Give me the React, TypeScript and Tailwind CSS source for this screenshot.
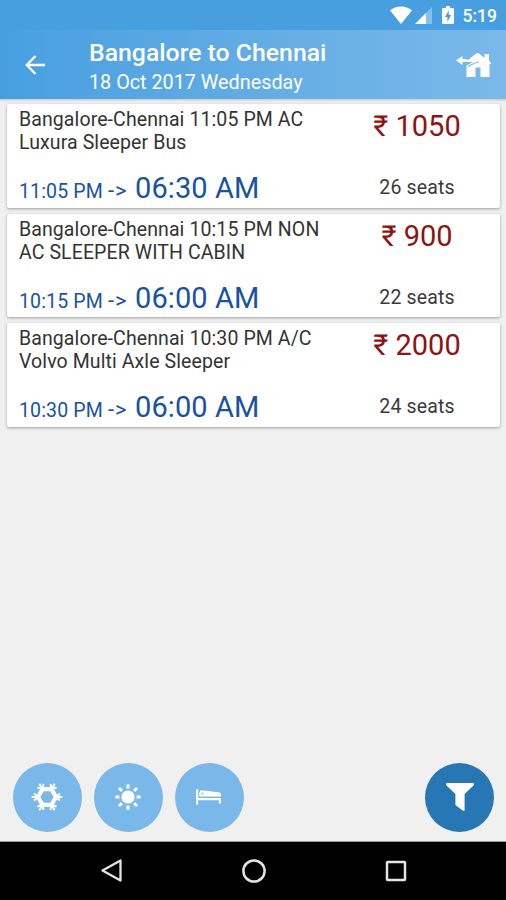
type Bus = {
  name: [string, string];
  departs: string;
  arrives: string;
  price: string;
  seats: number;
};

const buses: Bus[] = [
  { name: ['Bangalore-Chennai 11:05 PM AC', 'Luxura Sleeper Bus'], departs: '11:05 PM', arrives: '06:30 AM', price: '1050', seats: 26 },
  { name: ['Bangalore-Chennai 10:15 PM NON', 'AC SLEEPER WITH CABIN'], departs: '10:15 PM', arrives: '06:00 AM', price: '900', seats: 22 },
  { name: ['Bangalore-Chennai 10:30 PM A/C', 'Volvo Multi Axle Sleeper'], departs: '10:30 PM', arrives: '06:00 AM', price: '2000', seats: 24 },
];

function StatusBar() {
  return (
    <div className="flex h-[30px] items-center justify-end bg-[#479fe0] pr-[9px] text-white">
      <svg width="22" height="18" viewBox="0 0 22 18" fill="currentColor" className="mr-[3px]">
        <path d="M0 4.500C6-1 16-1 22 4.500L11 18z" />
      </svg>
      <svg width="18" height="17" viewBox="0 0 18 17" fill="currentColor" className="mr-[9px]">
        <path d="M0 17 17 0v17z" opacity=".35" />
        <path d="M0 17 11 6v11z" />
      </svg>
      <svg width="12" height="18" viewBox="0 0 12 18" className="mr-[9px]">
        <path d="M1.200 2H4V0h4v2h2.800Q12 2 12 3.200v13.600Q12 18 10.800 18H1.200Q0 18 0 16.800V3.200Q0 2 1.200 2z" fill="currentColor" />
        <path d="M6.800 4.500 2.900 11h2.500v4.800L9.200 9H6.800z" fill="#479fe0" />
      </svg>
      <span className="pt-[2px] text-[17.500px] font-medium leading-[30px]">5:19</span>
    </div>
  );
}

function AppBar() {
  return (
    <header className="flex h-[69px] items-start bg-gradient-to-r from-[#479fe0] to-[#7ab9e9] text-white">
      <svg width="20" height="20" viewBox="0 0 20 20" fill="none" stroke="currentColor" strokeWidth="2.300" className="ml-[25px] mt-[25px]">
        <path d="M20 10H2M10.500 1 1.700 10l8.800 9" />
      </svg>
      <div className="ml-[44px] flex-1 pt-[8px]">
        <h1 className="h-[30px] text-[24.800px] font-medium leading-[30px]">Bangalore to Chennai</h1>
        <p className="h-[28px] text-[19.800px] leading-[29px]">18 Oct 2017 Wednesday</p>
      </div>
      <svg width="36" height="26" viewBox="0 0 36 26" fill="currentColor" className="mr-[14px] mt-[22px]">
        <path d="M0 8.500 6.500 4v2.800l6 .9L20 1.500q1.500-1 3 0L28.500 6V2H33v6.500L35.500 12H33.500v13H24.500V15.500h-5V25H10.500V13.500L17 10 6.500 9.700V13z" />
        <path d="M12 14.500Q19 10.500 23 10" stroke="#72b5e8" strokeWidth="1.200" fill="none" />
      </svg>
    </header>
  );
}

function BusCard({ bus }: { bus: Bus }) {
  return (
    <article className="flex h-[103.500px] justify-between rounded-[2px] bg-white pl-[12.500px] shadow-[0_1px_3px_rgba(0,0,0,0.35)]">
      <div>
        <div className="pt-[4px] text-[19.500px] leading-[23px] tracking-[0.100px] text-[#333]">
          <p>{bus.name[0]}</p>
          <p>{bus.name[1]}</p>
        </div>
        <p className="mt-[16px] flex items-baseline leading-[36px] text-[#1852a4]">
          <span className="w-[84px] text-[19.500px] tracking-[0.150px]">{bus.departs}</span>
          <span className="ml-[5px] w-[27px] text-[22px] leading-none tracking-[0.800px]">-&gt;</span>
          <span className="text-[29px] tracking-[0.100px]">{bus.arrives}</span>
        </p>
      </div>
      <div className="w-[165px] text-center">
        <p className="pt-[4px] text-[29px] leading-[36px] text-[#8c1414]">₹ {bus.price}</p>
        <p className="mt-[32px] text-[19.500px] leading-[24px] tracking-[0.150px] text-[#3a3a3a]">{bus.seats} seats</p>
      </div>
    </article>
  );
}

function Snowflake() {
  const arms = [0, 60, 120, 180, 240, 300];
  return (
    <svg width="32" height="32" viewBox="-16 -16 32 32" fill="none" stroke="#fff" strokeWidth="1.900">
      <path d="M-9 0-4.500-7.800h9L9 0 4.500 7.800h-9z" strokeWidth="4.200" />
      {arms.map((a) => (
        <path key={a} d="M7 0H15.300M9 0 13-3.500M9 0 13 3.500" transform={`rotate(${a})`} />
      ))}
    </svg>
  );
}

function Sun() {
  const rays = [0, 45, 90, 135, 180, 225, 270, 315];
  return (
    <svg width="28" height="28" viewBox="-14 -14 28 28" fill="#fff">
      <circle r="6.600" />
      {rays.map((a) => (
        <path key={a} d="M8.600-1.700 12.800-1.300V1.300L8.600 1.700z" transform={`rotate(${a})`} />
      ))}
    </svg>
  );
}

function Bed() {
  return (
    <svg width="26" height="18" viewBox="0 0 26 18" fill="#fff">
      <path d="M0 1.200h2.200V10H25v5.500h-2.200V12.300H2.200v4.200H0zM3.300 8V5l1-2.500h4L24 4.500 25 6v2.500H3.300z" />
      <path d="m4.500 6.500 3-.8-2-1.500" stroke="#79b8e8" strokeWidth=".7" fill="none" />
    </svg>
  );
}

function Funnel() {
  return (
    <svg width="28" height="28" viewBox="0 0 28 28" fill="#fff">
      <path d="M.8 0h26.400q1.300 1 .3 2.500L18.600 11v16.500q-1.200.5-2 0L9.400 22V11L.5 2.500Q-.5 1 .8 0z" />
    </svg>
  );
}

const round = 'flex size-[69px] items-center justify-center rounded-full';

export default function App() {
  return (
    <div className="flex h-[900px] w-[506px] flex-col overflow-hidden bg-[#f0f0f0] font-['Roboto','Noto_Sans',sans-serif]">
      <StatusBar />
      <AppBar />
      <div className="h-[3px] bg-gradient-to-b from-[#c8cdd0] to-[#f0f0f0]" />
      <main className="flex flex-1 flex-col justify-between">
        <div className="flex flex-col gap-[6px] px-[6.500px] pt-[2px]">
          {buses.map((bus) => (
            <BusCard key={bus.departs} bus={bus} />
          ))}
        </div>
        <div className="flex gap-[12px] pb-[9.500px] pl-[12.500px] pr-[12px]">
          <button className={`${round} bg-[#79b8e8]`}><Snowflake /></button>
          <button className={`${round} bg-[#79b8e8]`}><Sun /></button>
          <button className={`${round} bg-[#79b8e8]`}><Bed /></button>
          <button className={`${round} ml-auto bg-[#2777b5]`}><Funnel /></button>
        </div>
      </main>
      <nav className="flex h-[59px] items-center justify-between border-t border-[#999] bg-black pl-[100px] pr-[99px] text-[#e4e4e4]">
        <svg width="24" height="26" viewBox="0 0 24 26" fill="none" stroke="currentColor" strokeWidth="2.300">
          <path d="M20.500 2.500v20L2.500 12.500z" strokeLinejoin="round" />
        </svg>
        <svg width="26" height="26" viewBox="1 0 26 26" fill="none" stroke="currentColor" strokeWidth="2.500">
          <circle cx="13" cy="13" r="10.600" />
        </svg>
        <svg width="22" height="22" viewBox="0 0 22 22" fill="none" stroke="currentColor" strokeWidth="2.500">
          <rect x="2" y="2" width="18" height="18" rx=".5" />
        </svg>
      </nav>
    </div>
  );
}
